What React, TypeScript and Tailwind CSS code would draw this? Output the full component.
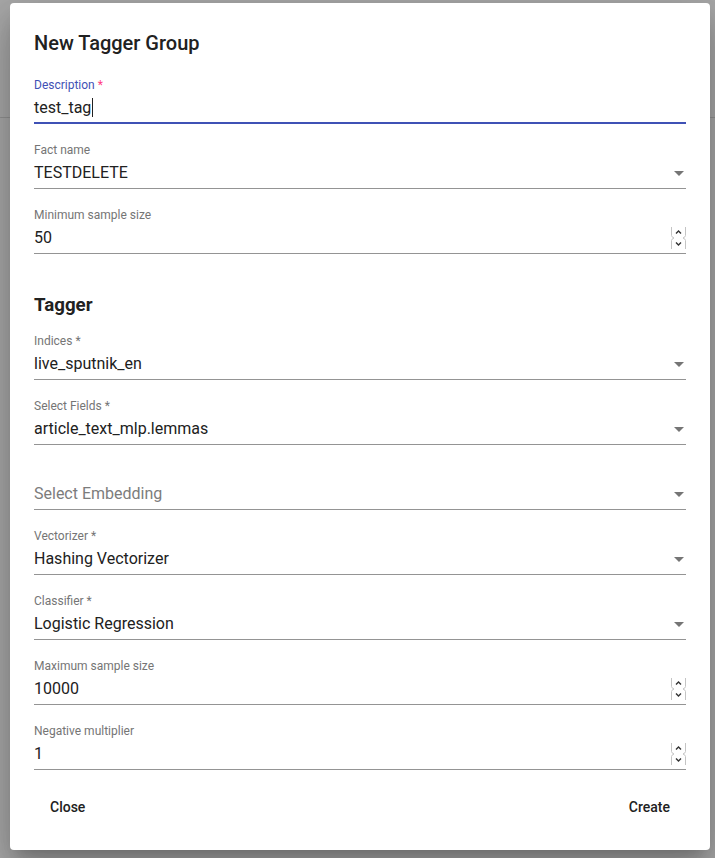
import React from "react";

function Arrow() {
  return (
    <div className="w-0 h-0 border-l-[5px] border-r-[5px] border-t-[5px] border-l-transparent border-r-transparent border-t-[#757575] mr-[2px]" />
  );
}

function Spinner() {
  return (
    <svg width="15" height="22" viewBox="0 0 15 22" className="mr-0">
      <path d="M0.5 0 V8.5 Q0.5 10 3 11 Q0.5 12 0.5 13.5 V22" fill="none" stroke="#c4c4c4" strokeWidth="1" />
      <path d="M14.5 0 V8.5 Q14.5 10 12 11 Q14.5 12 14.5 13.5 V22" fill="none" stroke="#c4c4c4" strokeWidth="1" />
      <path d="M5 6.5 L7.5 4 L10 6.5" fill="none" stroke="#333" strokeWidth="1.4" />
      <path d="M5 15.5 L7.5 18 L10 15.5" fill="none" stroke="#333" strokeWidth="1.4" />
    </svg>
  );
}

type FieldProps = {
  label?: string;
  required?: boolean;
  value: string;
  placeholder?: boolean;
  kind?: "select" | "number" | "text";
  focused?: boolean;
  className?: string;
};

function Field({ label, required, value, placeholder, kind = "text", focused, className = "" }: FieldProps) {
  return (
    <div className={"flex flex-col " + className}>
      <div className={"h-[14px] text-[12px] leading-[14px] " + (focused ? "text-[#3f51b5]" : "text-[#757575]")}>
        {label ? (
          <>
            {label}
            {required ? (
              <span className={focused ? "text-[#ff4081]" : ""}> *</span>
            ) : null}
          </>
        ) : null}
      </div>
      <div className="mt-[6px] h-[20px] flex items-center justify-between">
        <span
          className={
            "text-[16px] leading-[20px] " + (placeholder ? "text-[#7c7c7c]" : "text-[#212121]")
          }
        >
          {value}
          {focused ? <span className="inline-block w-px h-[19px] bg-[#212121] align-[-4px] ml-[1px]" /> : null}
        </span>
        {kind === "select" ? <Arrow /> : null}
        {kind === "number" ? <Spinner /> : null}
      </div>
      {focused ? (
        <div className="mt-[4px] h-[2px] bg-[#3f51b5]" />
      ) : (
        <div className="mt-[5px] h-px bg-[#949494]" />
      )}
    </div>
  );
}

export default function App() {
  return (
    <div className="relative w-full h-[858px] overflow-hidden bg-white" style={{ fontFamily: "Roboto, 'Liberation Sans', sans-serif" }}>
      <div className="h-[118px] border-b border-[#dcdcdc]" />
      <div className="absolute inset-0 bg-[rgba(0,0,0,0.34)]" />
      <div className="absolute left-[10px] top-[3px] w-[700px] h-[847px] bg-white rounded-[4px] shadow-[0_11px_15px_-7px_rgba(0,0,0,0.2),0_24px_38px_3px_rgba(0,0,0,0.14),0_9px_46px_8px_rgba(0,0,0,0.12)] px-6 pt-6 flex flex-col">
        <h2 className="text-[20px] leading-[32px] font-medium text-[#212121] mb-[19px]">New Tagger Group</h2>
        <Field label="Description" required value="test_tag" focused />
        <Field label="Fact name" value="TESTDELETE" kind="select" className="mt-[19px]" />
        <Field label="Minimum sample size" value="50" kind="number" className="mt-[19px]" />
        <h3 className="mt-[40px] mb-[18px] text-[18.72px] leading-[22px] font-bold text-[#212121]">Tagger</h3>
        <Field label="Indices" required value="live_sputnik_en" kind="select" />
        <Field label="Select Fields" required value="article_text_mlp.lemmas" kind="select" className="mt-[19px]" />
        <Field value="Select Embedding" placeholder kind="select" className="mt-[19px]" />
        <Field label="Vectorizer" required value="Hashing Vectorizer" kind="select" className="mt-[19px]" />
        <Field label="Classifier" required value="Logistic Regression" kind="select" className="mt-[19px]" />
        <Field label="Maximum sample size" value="10000" kind="number" className="mt-[19px]" />
        <Field label="Negative multiplier" value="1" kind="number" className="mt-[19px]" />
        <div className="mt-[19px] flex justify-between">
          <button className="h-9 px-4 text-[14px] font-medium text-[#212121] rounded">Close</button>
          <button className="h-9 px-4 text-[14px] font-medium text-[#212121] rounded">Create</button>
        </div>
      </div>
    </div>
  );
}
